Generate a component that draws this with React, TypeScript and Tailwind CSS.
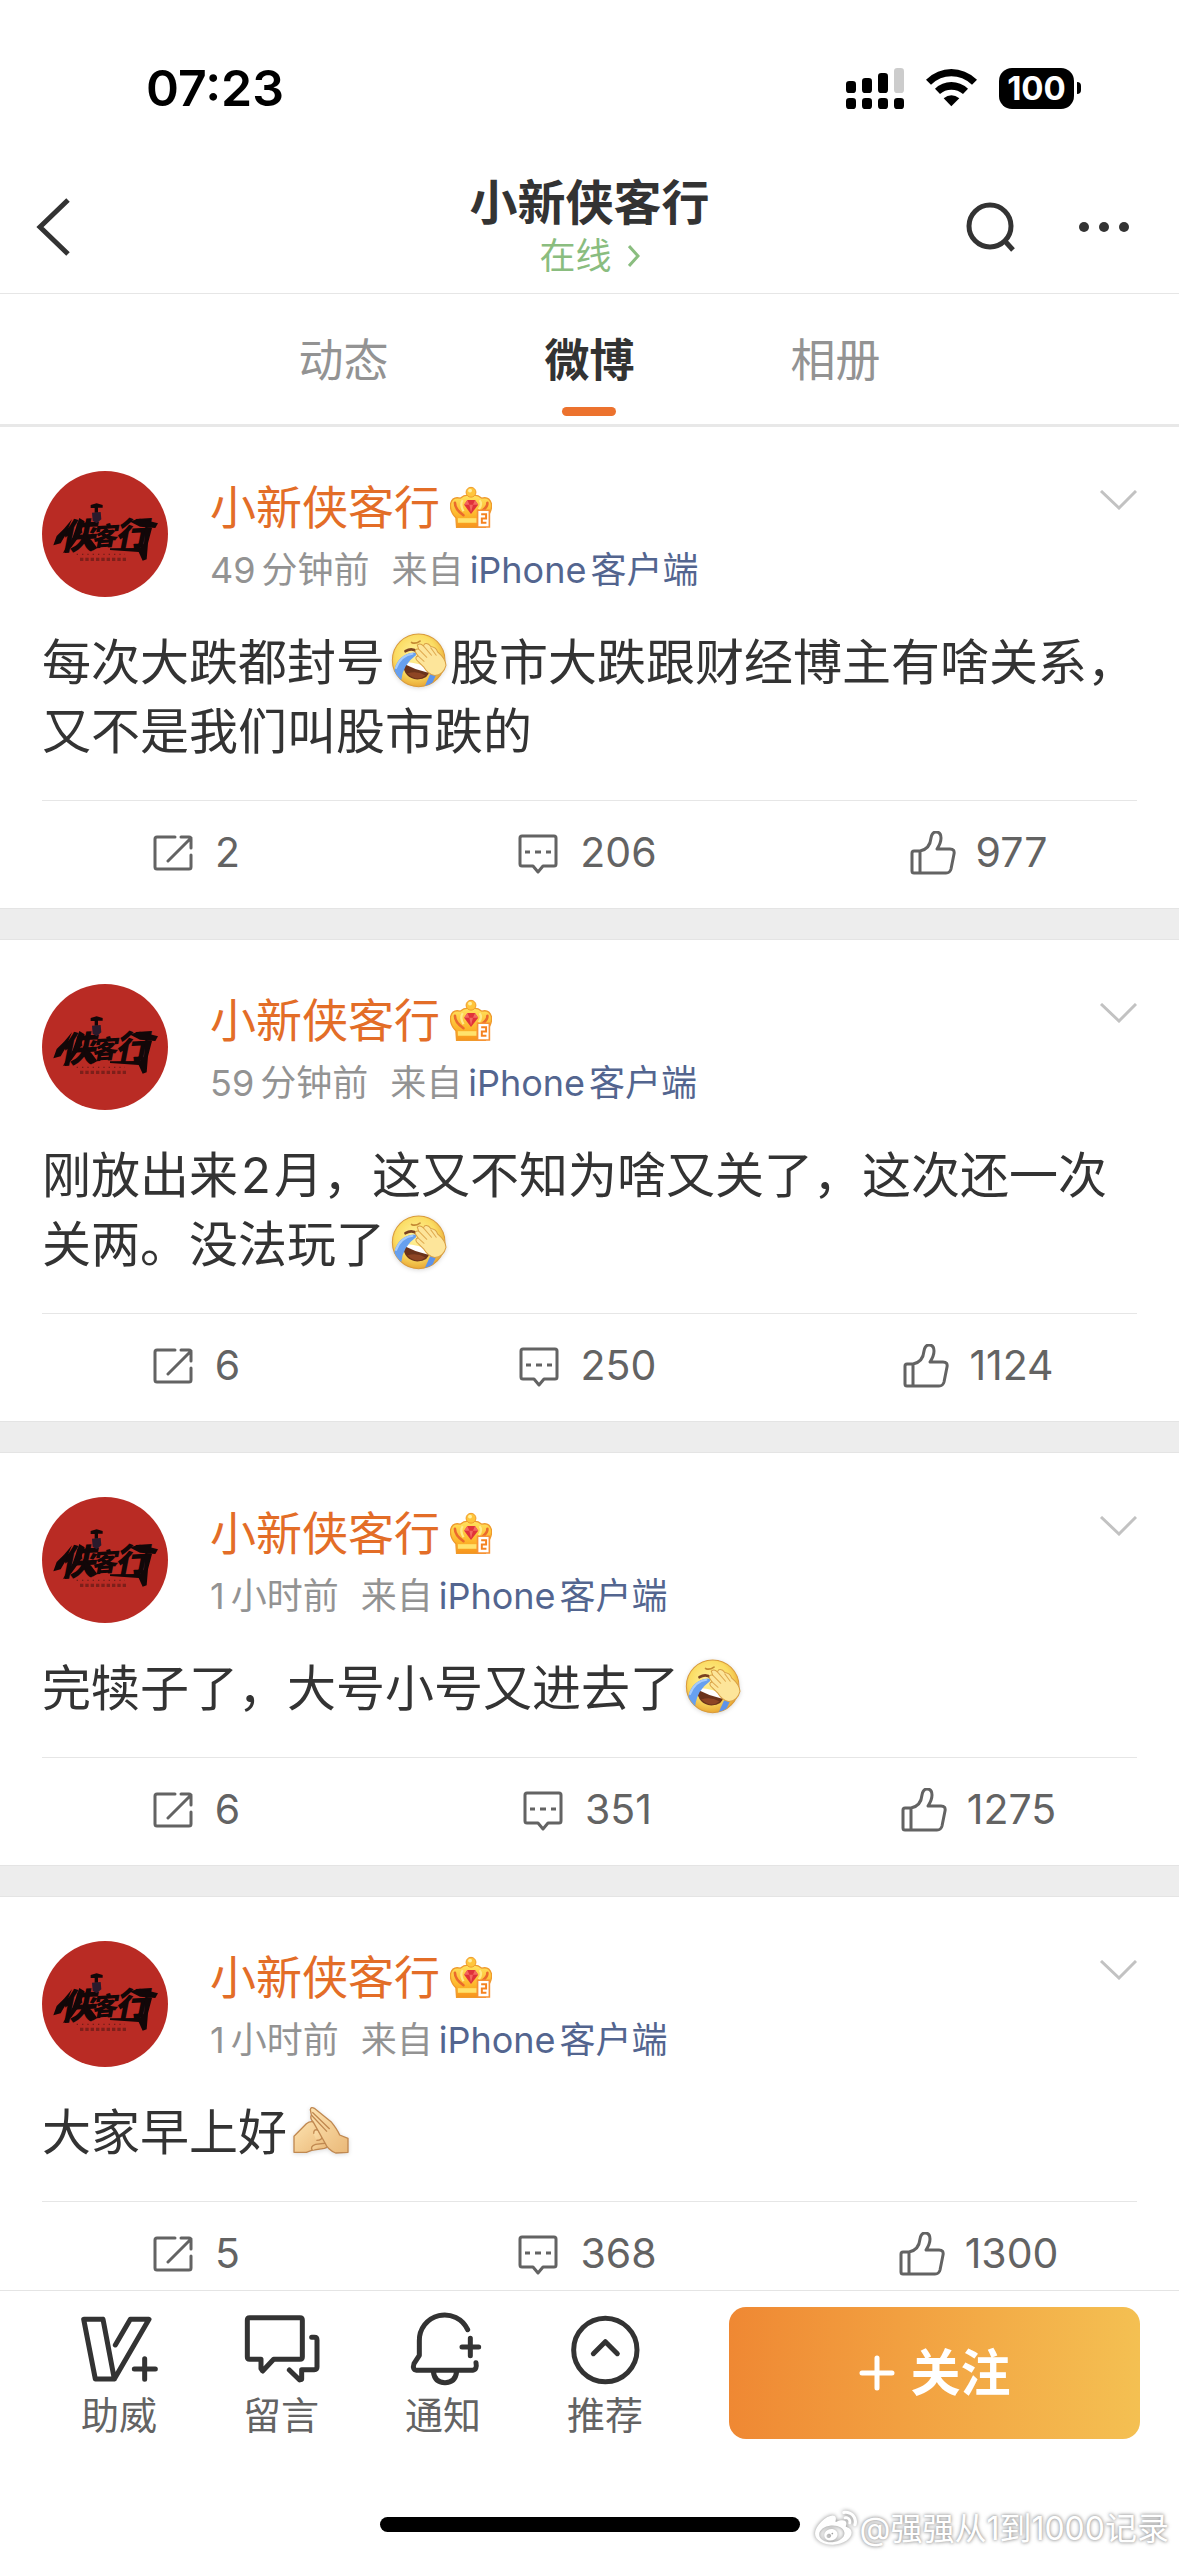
import React from "react";
import { FaWeibo } from "react-icons/fa";

type Piece = string | { icon: "laugh" | "hands" } | { latin: string };

interface Post {
  id: number;
  amount: string;
  unit: string;
  lines: Piece[][];
  reposts: number;
  comments: number;
  likes: number;
}

const posts: Post[] = [
  {
    id: 1,
    amount: "49",
    unit: "分钟前",
    lines: [["每次大跌都封号", { icon: "laugh" }, "股市大跌跟财经博主有啥关系，"], ["又不是我们叫股市跌的"]],
    reposts: 2,
    comments: 206,
    likes: 977,
  },
  {
    id: 2,
    amount: "59",
    unit: "分钟前",
    lines: [
      ["刚放出来", { latin: "2" }, "月，这又不知为啥又关了，这次还一次"],
      ["关两。没法玩了", { icon: "laugh" }],
    ],
    reposts: 6,
    comments: 250,
    likes: 1124,
  },
  {
    id: 3,
    amount: "1",
    unit: "小时前",
    lines: [["完犊子了，大号小号又进去了", { icon: "laugh" }]],
    reposts: 6,
    comments: 351,
    likes: 1275,
  },
  {
    id: 4,
    amount: "1",
    unit: "小时前",
    lines: [["大家早上好", { icon: "hands" }]],
    reposts: 5,
    comments: 368,
    likes: 1300,
  },
];

function Signal() {
  const tops = [90, 81, 66];
  return (
    <svg className="h-[41px] w-[58px]" viewBox="78 51 174 123" aria-hidden="true">
      {tops.map((y, i) => (
        <rect key={y} x={78 + i * 48} y={y} width="30" height={126 - y} rx="10" />
      ))}
      <rect x="222" y="51" width="30" height="75" rx="10" fill="#ccc" />
      {[0, 1, 2, 3].map((i) => (
        <rect key={i} x={78 + i * 48} y="141" width="30" height="33" rx="10" />
      ))}
    </svg>
  );
}

function Wifi() {
  return (
    <svg className="h-[38px] w-[51px]" viewBox="318 56 153 114" aria-hidden="true">
      <path d="M318 88Q352 56 394 56T471 88L456 103Q428 78 394 78T333 103Z" />
      <path d="M345 115Q366 95 394 95T444 115L429 131Q414 118 394 118T360 131Z" />
      <path d="M371 144Q394 125 418 144L394 168Z" />
    </svg>
  );
}

function Avatar() {
  return (
    <svg className="size-[126px] shrink-0 rounded-full bg-[#b92b24]" viewBox="36 33 378 378" role="img" aria-label="侠客行">
      <g fill="#120708" fontFamily="'Noto Sans CJK SC', sans-serif" fontWeight="900" fontStyle="italic" transform="rotate(-3 225 230)">
        <text x="88" y="262" fontSize="106">侠</text>
        <text x="184" y="256" fontSize="76">客</text>
        <text x="254" y="262" fontSize="100">行</text>
      </g>
      <g fill="#120708">
        <path d="M126 178L114 206L106 226L92 250L70 256L80 228L102 206Z" />
        <path d="M148 174L164 184L150 226L124 262L98 280L128 232Z" />
        <path d="M158 218L184 240L202 264L188 272L166 250Z" />
        <path d="M298 184L330 176L384 190L376 204L330 200Z" />
        <path d="M346 200L366 204L354 250L350 298L338 302L326 276L240 270V265L330 264L342 250Z" />
        <path d="M182 135L200 130L218 135V143H204V158H194V144H182Z" />
      </g>
      <path d="M186 158L212 156L214 178L200 190L188 182Z" fill="#291a2c" />
      <path d="M140 283H285" stroke="#561814" strokeWidth="4" strokeDasharray="4 12" opacity=".7" />
      <path d="M150 298H292" stroke="#561814" strokeWidth="10" strokeDasharray="10 6" opacity=".6" />
    </svg>
  );
}

function Crown() {
  return (
    <svg className="h-[43px] w-[42px]" viewBox="209 42 128 129" role="img" aria-label="会员2">
      <defs>
        <linearGradient id="crown-gold" x1="0" y1="0" x2="0" y2="1">
          <stop offset="0" stopColor="#ffe25e" />
          <stop offset=".6" stopColor="#fdb72c" />
          <stop offset="1" stopColor="#f7931c" />
        </linearGradient>
      </defs>
      <path d="M229 167L227 138Q207 118 211 94Q217 72 240 78Q254 66 273 70Q292 66 306 78Q328 72 335 94Q339 118 319 138L317 167Z" fill="url(#crown-gold)" stroke="#ef9a2c" strokeWidth="4" />
      <path d="M224 92Q224 112 250 130M323 92Q324 104 308 116" fill="none" stroke="#ea6a2c" strokeWidth="8" strokeLinecap="round" />
      <path d="M248 84Q238 96 250 118M299 84Q309 96 297 112" fill="none" stroke="#ffe98a" strokeWidth="7" />
      <path d="M233 146H290" stroke="#ffe26c" strokeWidth="14" />
      <circle cx="273" cy="60" r="15" fill="#ffc53b" stroke="#ef9a2c" strokeWidth="3" />
      <circle cx="270" cy="55" r="6" fill="#fff0a0" />
      <path d="M262 84H285L295 98L273 126L252 98Z" fill="#e0323a" />
      <path d="M262 84L268 98H252ZM285 84L279 98H295ZM268 98H279L273 122Z" fill="#f3685f" />
      <path d="M293 115H329V166H293Z" fill="#fff" stroke="#f79236" strokeWidth="5" />
      <path d="M304 127H319V140H306V153H320" fill="none" stroke="#f58220" strokeWidth="6" />
    </svg>
  );
}

function Laugh() {
  return (
    <svg className="ml-[6px] mr-[3px] inline-block size-[56px] overflow-visible align-[-9px] drop-shadow-sm" viewBox="34 36 166 166" role="img" aria-label="笑哭捂脸">
      <defs>
        <radialGradient id="face-yellow" cx=".45" cy=".4" r=".6">
          <stop offset="0" stopColor="#fff3a0" />
          <stop offset=".65" stopColor="#fbdc62" />
          <stop offset="1" stopColor="#e9a936" />
        </radialGradient>
        <clipPath id="face-clip">
          <circle cx="116" cy="117" r="78" />
        </clipPath>
      </defs>
      <circle cx="116" cy="117" r="78" fill="url(#face-yellow)" stroke="#d99a3a" strokeWidth="3" />
      <g clipPath="url(#face-clip)">
        <path d="M70 128Q110 128 148 146Q146 174 112 174Q72 170 70 128Z" fill="#6b331b" />
        <path d="M82 156Q110 146 136 162Q112 182 82 156Z" fill="#8e4524" />
        <path d="M78 122Q116 124 150 142L142 153Q108 146 78 130Z" fill="#fff" />
        <path d="M108 94Q66 94 48 132L40 160L64 178Q68 130 108 102Z" fill="#67a0ef" />
        <path d="M100 97Q62 102 48 142" fill="none" stroke="#a6cbfb" strokeWidth="6" />
        <path d="M150 158L134 194L156 186L168 160Z" fill="#5d93ea" />
      </g>
      <path d="M77 90Q96 78 112 92" fill="none" stroke="#7a4120" strokeWidth="8" strokeLinecap="round" />
      <path d="M95 64Q106 70 120 60" fill="none" stroke="#c58a34" strokeWidth="5" strokeLinecap="round" />
      <path d="M112 72Q120 64 130 74L134 68Q144 64 152 76Q168 78 172 92Q196 112 197 132Q190 160 164 162Q144 158 132 138L110 116Q104 106 114 104L106 92Q104 82 116 84Z" fill="#fde59a" stroke="#d9a045" strokeWidth="3" />
      <path d="M116 84L140 108M130 74L154 102M152 80L168 102M114 104L132 120" fill="none" stroke="#dfaa50" strokeWidth="3" strokeLinecap="round" />
    </svg>
  );
}

function Hands() {
  return (
    <svg className="ml-[6px] mr-[3px] inline-block size-[56px] overflow-visible align-[-9px] drop-shadow-sm" viewBox="36 26 168 168" role="img" aria-label="作揖">
      <defs>
        <linearGradient id="skin" x1="0" y1="0" x2="1" y2="1">
          <stop offset="0" stopColor="#fde3b0" />
          <stop offset="1" stopColor="#eab878" />
        </linearGradient>
      </defs>
      <g fill="url(#skin)" stroke="#c08850" strokeWidth="4" strokeLinejoin="round">
        <path d="M39 126L76 88Q92 76 106 88L124 112L140 148Q144 158 130 162L92 168L76 174L39 174Z" />
        <path d="M98 118Q98 102 112 108L122 124Q126 138 106 138M94 168Q86 156 104 150L138 146" />
        <path d="M88 46Q90 36 100 42L150 82Q168 104 176 122L201 132V174L164 176Q140 166 132 146L96 82Q86 72 91 62Z" />
        <path d="M91 62L138 112M94 54L146 104" fill="none" />
      </g>
    </svg>
  );
}

function Line({ pieces }: { pieces: Piece[] }) {
  return (
    <span className="block whitespace-nowrap">
      {pieces.map((p, i) => {
        if (typeof p === "string") return <React.Fragment key={i}>{p}</React.Fragment>;
        if ("latin" in p) return <span key={i} className="mx-[3px]">{p.latin}</span>;
        return p.icon === "laugh" ? <Laugh key={i} /> : <Hands key={i} />;
      })}
    </span>
  );
}

const thin = { fill: "none", stroke: "currentColor", strokeWidth: 3, strokeLinejoin: "round", strokeLinecap: "round" } as const;

function RepostIcon() {
  return (
    <svg className="h-[44px] w-[40px]" viewBox="0 0 40 44" aria-hidden="true" {...thin}>
      <path d="M22 6H4Q2 6 2 8V36Q2 38 4 38H36Q38 38 38 36V24M28 6H36Q38 6 38 8V17M38 7L15 30" />
    </svg>
  );
}

function CommentIcon() {
  return (
    <svg className="h-[44px] w-[40px]" viewBox="0 0 40 44" aria-hidden="true" {...thin}>
      <path d="M4 5H36Q38 5 38 7V33Q38 35 36 35H25L20 41L15 35H4Q2 35 2 33V7Q2 5 4 5Z" />
      <path d="M7 21H12M17 21H23M28 21H33" strokeLinecap="butt" />
    </svg>
  );
}

function LikeIcon() {
  return (
    <svg className="h-[44px] w-[46px]" viewBox="0 0 46 44" aria-hidden="true" {...thin}>
      <path d="M10 20Q20 18 21 7Q22 1 26 1Q31 1 31 7Q31 12 27 18H40Q45 18 44 23L41 38Q40 42 36 42H4Q2 42 2 40V22Q2 20 4 20ZM10 20V42" />
    </svg>
  );
}

function PostCard({ post }: { post: Post }) {
  return (
    <article className="bg-white">
      <div className="px-[42px] pt-11">
        <header className="flex items-start">
          <a href="#profile" className="shrink-0"><Avatar /></a>
          <div className="ml-[42px] flex-1">
            <div className="flex h-[72px] items-center gap-[10px]">
              <a href="#profile" className="text-[46px] leading-[72px] text-[#e36d27]">小新侠客行</a>
              <Crown />
            </div>
            <div className="flex h-[54px] items-center text-[36px] leading-[54px] text-[#939393]">
              <span>{post.amount}</span>
              <span className="ml-1.5">{post.unit}</span>
              <span className="ml-[22px]">来自</span>
              <a href="#source" className="ml-1.5 flex gap-1 text-[#53658f]">
                <span>iPhone</span>
                <span>客户端</span>
              </a>
            </div>
          </div>
          <button type="button" aria-label="更多操作" className="mt-[19px]">
            <svg className="h-5 w-[38px]" viewBox="0 0 38 20" fill="none" stroke="#c2c2c2" strokeWidth="3" aria-hidden="true">
              <path d="M2 1L20 18L37 1" />
            </svg>
          </button>
        </header>
        <p className="pb-[34px] pt-[31px] text-[49px] leading-[69px] text-[#333]">
          {post.lines.map((l, i) => <Line key={i} pieces={l} />)}
        </p>
      </div>
      <div className="mx-[42px] border-t border-[#e6e6e6]" />
      <div className="grid h-[107px] grid-cols-3 pb-1 text-[41px] text-[#636363]">
        <button type="button" aria-label="转发" className="flex items-center justify-center gap-[22px]"><RepostIcon />{post.reposts}</button>
        <button type="button" aria-label="评论" className="flex items-center justify-center gap-[22px] pr-1"><CommentIcon />{post.comments}</button>
        <button type="button" aria-label="赞" className="flex items-center justify-center gap-5 pr-2"><LikeIcon />{post.likes}</button>
      </div>
      <div className="h-8 border-y border-[#e4e4e4] bg-[#ededed]" />
    </article>
  );
}

const bold = { fill: "none", stroke: "#333", strokeWidth: 15, strokeLinejoin: "round", strokeLinecap: "round" } as const;

const actions = [
  {
    label: "助威",
    box: "51 20 252 240",
    art: <path d="M71 57H129L163 236H106ZM129 57L163 236L267 57H211L166 134M223 206H286M254 175V237" />,
  },
  {
    label: "留言",
    box: "537 20 252 240",
    art: <path d="M569 52H720Q727 52 727 59V170Q727 177 720 177H641L608 212L603 205V177H569Q562 177 562 170V59Q562 52 569 52ZM755 111H763Q771 111 771 119V200Q771 208 763 208H725V237L719 239L688 209" />,
  },
  {
    label: "通知",
    box: "63 20 252 240",
    art: <path d="M263 88A76 76 0 0 0 118 122V165L102 190Q96 208 110 210H278Q292 208 288 187M160 214Q164 247 195 247T230 214M246 140H296M271 114V166" />,
  },
  {
    label: "推荐",
    box: "552 20 252 240",
    art: <path d="M774 149A95 95 0 1 1 584 149A95 95 0 1 1 774 149M643 160L679 124L715 160" />,
  },
];

export default function App() {
  return (
    <div lang="zh-CN" className="relative flex h-dvh flex-col overflow-hidden bg-white font-['Inter','Noto_Sans_CJK_SC',sans-serif]">
      <div className="flex h-[176px] shrink-0 items-center justify-between pl-[146px] pr-[98px]">
        <span className="text-[50px] font-semibold leading-none text-black">07:23</span>
        <div className="flex items-center gap-[22px]">
          <Signal />
          <Wifi />
          <div className="flex items-center gap-[3px]">
            <span className="flex h-[41px] w-[75px] items-center justify-center rounded-[13px] bg-black text-[33px] font-bold leading-none text-white">100</span>
            <span className="h-3 w-1 rounded-r-full bg-black" />
          </div>
        </div>
      </div>

      <header className="grid h-[118px] shrink-0 grid-cols-[1fr_auto_1fr] items-start border-b border-[#e6e6e6] px-9">
        <div className="flex h-[102px] items-center">
          <button type="button" aria-label="返回">
            <svg className="h-[58px] w-[34px]" viewBox="0 0 34 58" fill="none" stroke="#333" strokeWidth="5" aria-hidden="true">
              <path d="M32 2L4 29L32 56" />
            </svg>
          </button>
        </div>
        <div className="flex flex-col items-center">
          <h1 className="text-[48px] font-semibold leading-[54px] text-[#333]">小新侠客行</h1>
          <a href="#status" className="flex items-center gap-4 text-[36px] leading-[52px] text-[#8abd7f]">
            在线
            <svg className="h-[22px] w-3" viewBox="0 0 12 22" fill="none" stroke="currentColor" strokeWidth="3" aria-hidden="true">
              <path d="M1 1L10 11L1 21" />
            </svg>
          </a>
        </div>
        <div className="flex h-[102px] items-center justify-end gap-[62px] pr-[13px]">
          <button type="button" aria-label="搜索">
            <svg className="size-[50px]" viewBox="0 0 50 50" fill="none" stroke="#333" strokeWidth="5" aria-hidden="true">
              <circle cx="24" cy="24" r="21" />
              <path d="M38 38L47 48" />
            </svg>
          </button>
          <button type="button" aria-label="更多">
            <svg className="h-3 w-[52px]" viewBox="0 0 52 12" fill="#333" aria-hidden="true">
              <circle cx="6" cy="6" r="5" />
              <circle cx="26" cy="6" r="5" />
              <circle cx="46" cy="6" r="5" />
            </svg>
          </button>
        </div>
      </header>

      <nav className="flex h-[133px] shrink-0 justify-center gap-[156px] border-b-[3px] border-[#e8e8e8] text-[45px] leading-[134px] text-[#939393]">
        <a href="#activity">动态</a>
        <a href="#weibo" aria-current="page" className="relative font-semibold text-[#333]">
          微博
          <span className="absolute bottom-2 left-1/2 h-[9px] w-[54px] -translate-x-1/2 rounded-full bg-[#ec722e]" />
        </a>
        <a href="#album">相册</a>
      </nav>

      <main className="min-h-0 flex-1 overflow-y-auto [scrollbar-width:none]">
        {posts.map((p) => <PostCard key={p.id} post={p} />)}
      </main>

      <footer className="shrink-0 border-t border-[#e4e4e4] bg-white">
        <div className="flex items-start gap-[43px] pl-[38px] pr-[39px] pt-4">
          <div className="grid flex-1 grid-cols-4">
            {actions.map((a) => (
              <button key={a.label} type="button" className="flex flex-col items-center text-[38px] leading-[56px] text-[#636363]">
                <svg className="h-20 w-[84px]" viewBox={a.box} aria-hidden="true" {...bold}>{a.art}</svg>
                {a.label}
              </button>
            ))}
          </div>
          <button type="button" className="flex h-[132px] w-[411px] items-center justify-center gap-4 rounded-[17px] bg-linear-to-r from-[#ef8833] to-[#f4c052] text-[50px] font-semibold text-white">
            <svg className="size-9" viewBox="0 0 36 36" stroke="#fff" strokeWidth="5" strokeLinecap="round" aria-hidden="true">
              <path d="M18 3V33M3 18H33" />
            </svg>
            关注
          </button>
        </div>
        <div className="mx-auto mb-6 mt-[74px] h-[15px] w-[420px] rounded-full bg-black" />
      </footer>

      <div className="absolute bottom-1 right-[10px] flex items-center gap-0.5 text-[32px] leading-[46px] text-white [text-shadow:0_0_3px_#999,0_0_4px_#aaa]">
        <FaWeibo className="size-[42px] drop-shadow-[0_0_2px_#888]" aria-hidden="true" />
        <span>@强强从1到1000记录</span>
      </div>
    </div>
  );
}
